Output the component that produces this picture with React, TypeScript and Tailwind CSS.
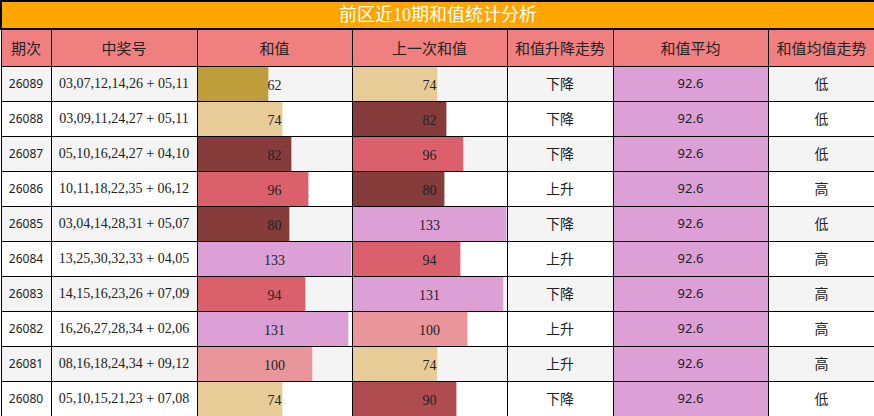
import React from "react";

type Row = {
  id: string;
  nums: string;
  sum: number;
  prev: number;
  trend: string;
  avg: string;
  avgTrend: string;
};

const rows: Row[] = [
  { id: "26089", nums: "03,07,12,14,26 + 05,11", sum: 62, prev: 74, trend: "下降", avg: "92.6", avgTrend: "低" },
  { id: "26088", nums: "03,09,11,24,27 + 05,11", sum: 74, prev: 82, trend: "下降", avg: "92.6", avgTrend: "低" },
  { id: "26087", nums: "05,10,16,24,27 + 04,10", sum: 82, prev: 96, trend: "下降", avg: "92.6", avgTrend: "低" },
  { id: "26086", nums: "10,11,18,22,35 + 06,12", sum: 96, prev: 80, trend: "上升", avg: "92.6", avgTrend: "高" },
  { id: "26085", nums: "03,04,14,28,31 + 05,07", sum: 80, prev: 133, trend: "下降", avg: "92.6", avgTrend: "低" },
  { id: "26084", nums: "13,25,30,32,33 + 04,05", sum: 133, prev: 94, trend: "上升", avg: "92.6", avgTrend: "高" },
  { id: "26083", nums: "14,15,16,23,26 + 07,09", sum: 94, prev: 131, trend: "下降", avg: "92.6", avgTrend: "高" },
  { id: "26082", nums: "16,26,27,28,34 + 02,06", sum: 131, prev: 100, trend: "上升", avg: "92.6", avgTrend: "高" },
  { id: "26081", nums: "08,16,18,24,34 + 09,12", sum: 100, prev: 74, trend: "上升", avg: "92.6", avgTrend: "高" },
  { id: "26080", nums: "05,10,15,21,23 + 07,08", sum: 74, prev: 90, trend: "下降", avg: "92.6", avgTrend: "低" },
];

const colorFor = (v: number): string => {
  if (v <= 62) return "#bd9e3a";
  if (v <= 74) return "#e7cc97";
  if (v <= 82) return "#853c3b";
  if (v <= 90) return "#ae4b4e";
  if (v <= 96) return "#da616b";
  if (v <= 100) return "#e8969a";
  return "#dda0d6";
};

const MAX = 133;

function BarCell({ v }: { v: number }) {
  return (
    <td className="relative border border-black p-0 text-center">
      <div
        className="absolute left-0 top-0 bottom-0 border-r border-white/60"
        style={{ width: `${(v / MAX) * 100}%`, backgroundColor: colorFor(v) }}
      />
      <span className="relative text-[14px] text-[#222]" style={{ fontFamily: '"Liberation Serif", serif' }}>
        {v}
      </span>
    </td>
  );
}

const cjk = '"Noto Sans CJK SC", sans-serif';

export default function App() {
  return (
    <div className="w-[874px] h-[416px] bg-white">
      <table className="w-[874px] table-fixed border-collapse border border-black">
        <colgroup>
          <col className="w-[50px]" />
          <col className="w-[146px]" />
          <col className="w-[155px]" />
          <col className="w-[155px]" />
          <col className="w-[106px]" />
          <col className="w-[155px]" />
          <col className="w-[107px]" />
        </colgroup>
        <thead>
          <tr className="h-[28px]">
            <th
              colSpan={7}
              className="border-2 border-black bg-[#ffa500] p-0 text-center text-[18px] font-normal leading-none text-white"
              style={{ fontFamily: '"Liberation Serif", "Noto Sans CJK SC", serif' }}
            >
              前区近10期和值统计分析
            </th>
          </tr>
          <tr className="h-[37px] bg-[#f08080]">
            {["期次", "中奖号", "和值", "上一次和值", "和值升降走势", "和值平均", "和值均值走势"].map((h) => (
              <th
                key={h}
                className="border border-black p-0 text-center text-[15px] font-normal text-[#222]"
                style={{ fontFamily: cjk }}
              >
                {h}
              </th>
            ))}
          </tr>
        </thead>
        <tbody>
          {rows.map((r, i) => (
            <tr key={r.id} className={`h-[35px] ${i % 2 === 0 ? "bg-[#f4f4f4]" : "bg-white"}`}>
              <td
                className="border border-black p-0 text-center text-[12px] text-[#222]"
                style={{ fontFamily: '"Noto Sans", sans-serif' }}
              >
                {r.id}
              </td>
              <td
                className="border border-black p-0 text-center text-[14px] text-[#222]"
                style={{ fontFamily: '"Liberation Serif", serif' }}
              >
                {r.nums}
              </td>
              <BarCell v={r.sum} />
              <BarCell v={r.prev} />
              <td className="border border-black p-0 text-center text-[14px] text-[#222]" style={{ fontFamily: cjk }}>
                {r.trend}
              </td>
              <td
                className="border border-black bg-[#dda0d6] p-0 text-center text-[13px] text-[#222]"
                style={{ fontFamily: '"Noto Sans", sans-serif' }}
              >
                {r.avg}
              </td>
              <td className="border border-black p-0 text-center text-[14px] text-[#222]" style={{ fontFamily: cjk }}>
                {r.avgTrend}
              </td>
            </tr>
          ))}
        </tbody>
      </table>
    </div>
  );
}
